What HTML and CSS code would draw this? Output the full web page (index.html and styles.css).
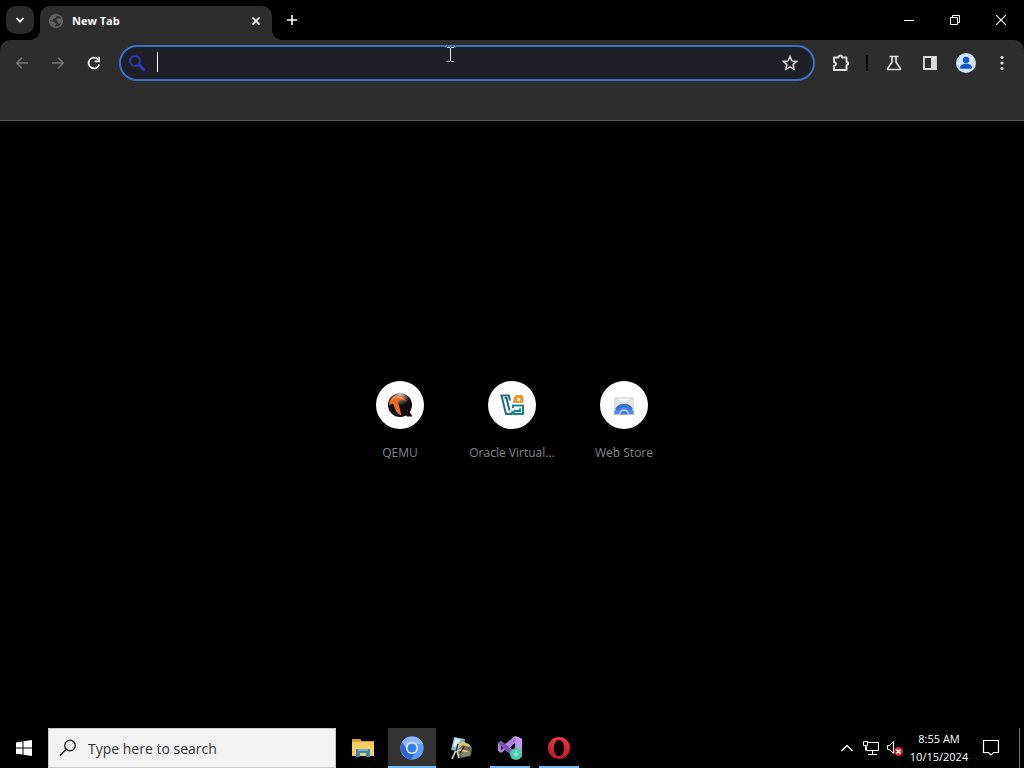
FILE: index.html
```html
<!DOCTYPE html>
<html lang="en">
<head>
<meta charset="utf-8">
<meta name="viewport" content="width=device-width, initial-scale=1">
<title>New Tab</title>
<link rel="stylesheet" href="styles.css">
</head>
<body>
<div class="desktop">
  <header class="browser">
    <div class="tabstrip">
      <button class="tab-search" aria-label="Search tabs"><svg width="12" height="12" viewBox="0 0 12 12"><path d="M2.500 4l3.500 3.700L9.500 4" fill="none" stroke="#fff" stroke-width="1.800"/></svg></button>
      <div class="tab">
        <svg width="16" height="16" viewBox="0 0 16 16"><circle cx="8" cy="8" r="6.300" fill="#303030" stroke="#626262" stroke-width="1.600"/><path d="M2 5l3-3 4 0-1 2.500L5 6v2L2 7zM2 8l4 1 2 2-1 3-3-2zM8 7l2-2 4 1v2l-2 3-2-1-.5-2z" fill="#626262"/></svg>
        <span class="tab-title">New Tab</span>
        <button class="icon-button tab-close" aria-label="Close tab"><svg width="10" height="10" viewBox="0 0 10 10"><path d="M1.500 1.500l7 7M8.500 1.500l-7 7" stroke="#fff" stroke-width="1.600"/></svg></button>
      </div>
      <button class="icon-button new-tab" aria-label="New tab"><svg width="12" height="12" viewBox="0 0 12 12"><path d="M6 1v10M1 6h10" stroke="#fff" stroke-width="1.600"/></svg></button>
      <div class="window-controls">
        <button class="window-button" aria-label="Minimize"><svg width="10" height="10" viewBox="0 0 10 10"><path d="M0 5.500h10" stroke="#fff"/></svg></button>
        <button class="window-button" aria-label="Restore"><svg width="10" height="10" viewBox="0 0 10 10"><path d="M.5 2.500h7v7h-7zM2.500 2.500v-2h7v7h-2" fill="none" stroke="#fff"/></svg></button>
        <button class="window-button" aria-label="Close"><svg width="10" height="10" viewBox="0 0 10 10"><path d="M0 0l10 10M10 0L0 10" stroke="#fff" stroke-width="1.100"/></svg></button>
      </div>
    </div>
    <div class="toolbar">
      <div class="button-group">
        <button class="icon-button" aria-label="Back"><svg width="16" height="16" viewBox="0 0 16 16"><path d="M14 8H3M8 2.800L2.800 8 8 13.200" fill="none" stroke="#747474" stroke-width="1.600"/></svg></button>
        <button class="icon-button" aria-label="Forward"><svg width="16" height="16" viewBox="0 0 16 16"><path d="M2 8h11M8 2.800L13.200 8 8 13.200" fill="none" stroke="#747474" stroke-width="1.600"/></svg></button>
        <button class="icon-button" aria-label="Reload"><svg width="16" height="16" viewBox="0 0 16 16"><path d="M13.200 9.500A5.400 5.400 0 1 1 12 4.400" fill="none" stroke="#f4f4f4" stroke-width="1.800"/><path d="M14 1.800v5.400H8.600V5.600h3.700V1.800z" fill="#f4f4f4"/></svg></button>
      </div>
      <div class="address-bar">
        <svg width="18" height="18" viewBox="0 0 18 18"><circle cx="7" cy="7" r="5" fill="none" stroke="#3038a8" stroke-width="2.200"/><path d="M10.500 10.500l6 6" stroke="#3434d4" stroke-width="2.600"/></svg>
        <span class="caret"></span>
        <input class="address-input" type="text" aria-label="Address and search bar">
        <button class="icon-button" aria-label="Bookmark this tab"><svg width="18" height="18" viewBox="0 0 18 18"><path d="M9 2.500l1.900 4.400 4.800.5-3.600 3.200 1 4.700L9 12.900l-4.100 2.400 1-4.700-3.600-3.200 4.800-.5z" fill="none" stroke="#dcdcdc" stroke-width="1.500"/></svg></button>
        <svg class="pointer" width="9" height="17" viewBox="0 0 9 17"><path d="M1 1.500h2.500l1 1 1-1H8M4.500 2v13M1 15.500h2.500l1-1 1 1H8" fill="none" stroke="#f0f0f0"/></svg>
      </div>
      <button class="icon-button" aria-label="Extensions"><svg width="20" height="20" viewBox="0 0 20 20"><path d="M3 4.500h4.500c0-2.600 3.600-2.600 3.600 0h4.400v4.300c2.300.2 2.300 3.200 0 3.400v4.800H3v-4.100c2.800-.6 2.800-3.300 0-3.900z" fill="none" stroke="#dedede" stroke-width="1.900" stroke-linejoin="round"/></svg></button>
      <span class="separator"></span>
      <div class="button-group">
        <button class="icon-button" aria-label="Experiments"><svg width="18" height="18" viewBox="0 0 18 18"><path d="M4.500 2.500h9M7 3v5L2.800 14.200c-.5.800-.3 1.300.5 1.300h11.400c.8 0 1-.5.500-1.300L11 8V3" fill="none" stroke="#dedede" stroke-width="1.700"/></svg></button>
        <button class="icon-button" aria-label="Side panel"><svg width="16" height="16" viewBox="0 0 16 16"><path d="M2 2h12v12H2z" fill="none" stroke="#dedede" stroke-width="1.800"/><path d="M9 2h5v12H9z" fill="#dedede"/></svg></button>
        <button class="icon-button" aria-label="Profile"><svg width="20" height="20" viewBox="0 0 20 20"><circle cx="10" cy="10" r="10" fill="#d5e3fc"/><circle cx="10" cy="7" r="3.200" fill="#1157c5"/><path d="M4 14.800c0-3 3-4 6-4s6 1 6 4q0 1-1 1H5q-1 0-1-1z" fill="#1157c5"/></svg></button>
        <button class="icon-button" aria-label="Menu"><svg width="16" height="16" viewBox="0 0 16 16"><g fill="#dedede"><circle cx="8" cy="2.500" r="1.600"/><circle cx="8" cy="8" r="1.600"/><circle cx="8" cy="13.500" r="1.600"/></g></svg></button>
      </div>
    </div>
  </header>

  <main class="page">
    <a class="shortcut" href="#qemu">
      <span class="shortcut-icon"><svg width="26" height="26" viewBox="0 0 26 26"><defs><radialGradient id="ball" cx=".5" cy=".08" r=".45"><stop offset="0" stop-color="#c8c0b8"/><stop offset="1" stop-color="#100c0a"/></radialGradient></defs><circle cx="13" cy="13" r="12" fill="url(#ball)"/><path d="M16 17l7-1-.3 4 2.800 4.500h-5.500L17 22z" fill="#100c0a"/><path d="M2.500 9C5 4 9 3 12 4c4 0 6 2 7 5-2-1.500-4-2-6-1-2 1.300-1.500 4-.8 6.500.8 3 1.500 6 2.300 9-3.500-1.500-6-4-6.800-7.500C7 13 6.500 11 4.500 12l-2 1.500C2 12 2 10.500 2.500 9z" fill="#ee6b27"/><path d="M5 7c3-3 6-3 9-1" fill="none" stroke="#ff9658" stroke-width="1.500"/><circle cx="14.500" cy="6" r=".8" fill="#fff"/></svg></span>
      <span class="shortcut-label">QEMU</span>
    </a>
    <a class="shortcut" href="#virtualbox">
      <span class="shortcut-icon"><svg width="26" height="26" viewBox="0 0 26 26"><g fill="none" stroke-width="2"><path d="M11 8.500L9.800 3.500H2.500L7 22h5.500l1-3M5.500 6h2l3 12.500" stroke="#236d78"/><path d="M14 16v-2.500h10V22H14.500l1-3h5.500v-2.500" stroke="#198590"/></g><path fill="#ec9c2f" fill-rule="evenodd" d="M14 11l1-6 2-2h6l1.500 2v6zm4-2h3V6h-2z"/></svg></span>
      <span class="shortcut-label">Oracle Virtual...</span>
    </a>
    <a class="shortcut" href="#store">
      <span class="shortcut-icon"><svg width="22" height="22" viewBox="0 0 22 22"><path d="M1 3h20v17H1z" fill="#e2e3e6"/><path d="M7 5.500h8" stroke="#f5f5f5" stroke-width="2" stroke-linecap="round"/><path d="M1 20.500a10 9.500 0 0 1 20 0z" fill="#5389ee"/><path d="M3.500 15.500A9 9 0 0 1 18.500 15.500" fill="none" stroke="#386fd0" stroke-width="3.500"/><path d="M6 20.500a5 5 0 0 1 10 0z" fill="#b9d0fb"/><path d="M7.500 20.500a3.500 3.500 0 0 1 7 0z" fill="#397de8"/></svg></span>
      <span class="shortcut-label">Web Store</span>
    </a>
  </main>

  <footer class="taskbar">
    <button class="task-button" aria-label="Start"><svg width="16" height="16" viewBox="0 0 16 16"><path d="M0 2.400L6.500 1.400V7.500H0zM7.500 1.200L16 0v7.500H7.500zM0 8.500h6.500v6.100L0 13.700zM7.500 8.500H16V16l-8.500-1.200z" fill="#fff"/></svg></button>
    <label class="search">
      <svg width="18" height="18" viewBox="0 0 18 18"><circle cx="11" cy="6.500" r="5.300" fill="none" stroke="#252525" stroke-width="1.400"/><path d="M7 10.500L1 16.500" stroke="#252525" stroke-width="1.500"/></svg>
      <input class="search-input" type="text" placeholder="Type here to search" aria-label="Type here to search">
    </label>
    <div class="apps">
      <button class="task-button" aria-label="File Explorer"><svg width="22" height="20" viewBox="0 0 22 20"><path d="M0 1h8l2 2h12v14H0z" fill="#d99e32"/><path d="M0 4h22v14H0z" fill="#f6cf62"/><path d="M4 12q0-1 1-1h12q1 0 1 1v7h-4v-4H8v4H4z" fill="#3f86b8"/><path d="M6 11h10v2H6z" fill="#70b0d9"/></svg></button>
      <button class="task-button active" aria-label="Chromium"><svg width="24" height="24" viewBox="0 0 24 24"><circle cx="12" cy="12" r="11.700" fill="#5c9cf2"/><path d="M2 6A12 12 0 0 1 22 6L23 8H12a5 5 0 0 0-4 6z" fill="#8fb6f4"/><path d="M2 6a12 12 0 0 0 9 17.500l4-6.500c-4 1-7-1-8-3z" fill="#3565cc"/><circle cx="12" cy="12" r="6" fill="#e3efff"/><circle cx="12" cy="12" r="4.500" fill="#397de8"/></svg></button>
      <button class="task-button" aria-label="System tools"><svg width="24" height="26" viewBox="0 0 24 26"><path d="M5 2l11 2-1 7-5 5-8-1z" fill="#82b9c8"/><path d="M6 3l6 1.500L8 11l-4 1z" fill="#dceeee"/><path d="M8 11l5-5 7 3 3 4-1 8-10 2-4-5z" fill="#6b6650"/><path d="M7 11l6-5 8 4-1 2-6-2-5 4zM11 14l9 2v2l-9-2z" fill="#ddc568"/><path d="M12 18l9-2v4l-8 2z" fill="#85877c"/><path d="M14 8l-6 5-5 11M13 14l-5 2 2 7" fill="none" stroke="#bfc5bd" stroke-width="1.800"/><path d="M9 9l-2 7M15 12l-4 6" stroke="#292a23" stroke-width="1.300"/></svg></button>
      <button class="task-button running" aria-label="Visual Studio"><svg width="26" height="26" viewBox="0 0 26 26"><path d="M18 1l7 3v17l-6 2L8 15l-4 3-3-2V8l3-2 4 3zM18 8l-5 4.500 5 4.500zM4 9v6l3-3z" fill="#ab80d9" fill-rule="evenodd"/><path d="M18 1l7 3v18l-6 1V7z" fill="#c29aeb"/><path d="M4 6l4 3 10 8v6L8 15 1 8z" fill="#7b55a8"/><circle cx="19" cy="19" r="6" fill="#45cba8"/><path d="M19 15v6m-2.500-2.500L19 21l2.500-2.500" stroke="#8ce8cc" fill="none" stroke-width="1.500"/></svg></button>
      <button class="task-button running" aria-label="Opera"><svg width="24" height="24" viewBox="0 0 24 24"><defs><linearGradient id="ring" x2="0" y2="1"><stop stop-color="#f03446"/><stop offset="1" stop-color="#b51b2b"/></linearGradient></defs><path fill-rule="evenodd" d="M12 1a11 11 0 1 0 0 22 11 11 0 0 0 0-22zm0 3c3 0 5 3.500 5 8s-2 8-5 8-5-3.500-5-8 2-8 5-8z" fill="url(#ring)"/></svg></button>
    </div>
    <div class="tray">
      <button class="tray-button" aria-label="Show hidden icons"><svg width="14" height="10" viewBox="0 0 14 10"><path d="M1.500 8L7 2.500 12.500 8" fill="none" stroke="#fff" stroke-width="1.300"/></svg></button>
      <button class="tray-button" aria-label="Network"><svg width="18" height="16" viewBox="0 0 18 16"><path d="M5.500 2.500h11v8h-12v-4M10.500 10.500v4M6 14.500h9M1.500 1.500h4v4h-4zM3.500 5.500v5" fill="none" stroke="#fff"/></svg></button>
      <button class="tray-button" aria-label="Volume muted"><svg width="18" height="16" viewBox="0 0 18 16"><path d="M1.500 5.500h2l4-4v12l-4-4h-2z" fill="none" stroke="#fff"/><circle cx="12.500" cy="11.500" r="4.500" fill="#c92b43"/><path d="M10.500 9.500l4 4m0-4l-4 4" stroke="#fff" stroke-width="1.300"/></svg></button>
      <button class="clock"><span>8:55 AM</span><span>10/15/2024</span></button>
      <button class="notifications" aria-label="Notifications"><svg width="18" height="18" viewBox="0 0 18 18"><path d="M1.500 1.500h15v12h-5L9 16l-2.500-2.500h-5z" fill="none" stroke="#fff" stroke-width="1.200"/></svg></button>
      <button class="show-desktop" aria-label="Show desktop"></button>
    </div>
  </footer>
</div>
</body>
</html>
```
FILE: styles.css
```css
* { box-sizing: border-box; }
body {
  margin: 0;
  background: #000;
  color: #fff;
  font-family: "Open Sans", "Noto Sans", sans-serif;
  font-size: 12px;
}
button, input { font: inherit; color: inherit; border: 0; padding: 0; background: none; outline: 0; }
svg { display: block; flex: none; }
.desktop { display: flex; flex-direction: column; min-height: 100vh; }

.tabstrip { display: flex; height: 40px; padding-left: 6px; }
.tab-search {
  display: grid;
  place-items: center;
  width: 28px;
  height: 28px;
  margin-top: 6px;
  border-radius: 10px;
  background: #2b2b2b;
}
.tab {
  position: relative;
  display: flex;
  align-items: center;
  gap: 8px;
  width: 232px;
  margin: 6px 0 0 6px;
  padding: 0 2px 5px 8px;
  border-radius: 10px 10px 0 0;
  background: #2d2d2d;
}
.tab::before, .tab::after {
  content: "";
  position: absolute;
  bottom: 0;
  width: 10px;
  height: 10px;
}
.tab::before { right: 100%; background: radial-gradient(circle at 0 0, transparent 10px, #2d2d2d 10px); }
.tab::after { left: 100%; background: radial-gradient(circle at 100% 0, transparent 10px, #2d2d2d 10px); }
.tab-title { flex: 1; font-size: 11px; font-weight: 700; }
.icon-button { display: grid; place-items: center; flex: none; width: 28px; height: 28px; }
.new-tab { margin: 6px 0 0 6px; }
.window-controls { display: flex; margin-left: auto; }
.window-button { display: grid; place-items: center; width: 46px; height: 40px; }

.toolbar {
  display: flex;
  align-items: center;
  height: 81px;
  padding: 5px 8px 39px;
  border-bottom: 1px solid #5a5a5a;
  border-radius: 10px 10px 0 0;
  background: #2d2d2d;
}
.button-group { display: flex; gap: 8px; }
.address-bar {
  position: relative;
  display: flex;
  align-items: center;
  flex: 1;
  height: 36px;
  margin: 0 12px 0 11px;
  padding: 0 9px 0 7px;
  border: 2px solid #3e70bd;
  border-radius: 18px;
  background: #1f1f27;
}
.caret { width: 1px; height: 20px; margin: 0 0 2px 11px; background: #fff; }
.address-input { flex: 1; min-width: 0; height: 28px; font-size: 14px; }
.pointer { position: absolute; left: 325px; top: -1px; }
.separator { width: 2px; height: 16px; margin: 0 12px 0 11px; background: #080808; }

.page { flex: 1; display: flex; align-items: center; justify-content: center; padding-bottom: 6px; }
.shortcut {
  display: flex;
  flex-direction: column;
  align-items: center;
  gap: 14px;
  width: 112px;
  color: #80868b;
  text-decoration: none;
}
.shortcut-icon { display: grid; place-items: center; width: 48px; height: 48px; border-radius: 50%; background: #fff; }
.shortcut-label { line-height: 20px; white-space: nowrap; }

.taskbar { display: flex; height: 40px; background: #000; }
.task-button { display: grid; place-items: center; width: 48px; height: 40px; }
.search {
  display: flex;
  align-items: center;
  gap: 11px;
  flex: 0 1 288px;
  padding: 0 12px 0 10px;
  border: 1px solid #ccc;
  background: #f2f2f2;
}
.search-input { flex: 1; min-width: 0; font-size: 14px; color: #333; }
.search-input::placeholder { color: #333; opacity: 1; }
.apps { display: flex; gap: 1px; margin-left: 3px; }
.active { background: linear-gradient(#76b9ed, #76b9ed) center bottom / 100% 2px no-repeat #333; }
.running { background: linear-gradient(#76b9ed, #76b9ed) center bottom / 40px 2px no-repeat; }
.tray { display: flex; margin-left: auto; }
.tray-button { display: grid; place-items: center; width: 24px; }
.clock {
  display: flex;
  flex-direction: column;
  justify-content: center;
  align-items: center;
  width: 64px;
  font-size: 11px;
  line-height: 18px;
}
.notifications { display: grid; place-items: center; width: 40px; margin-right: 8px; }
.show-desktop { width: 5px; border-left: 1px solid #777; }
```
